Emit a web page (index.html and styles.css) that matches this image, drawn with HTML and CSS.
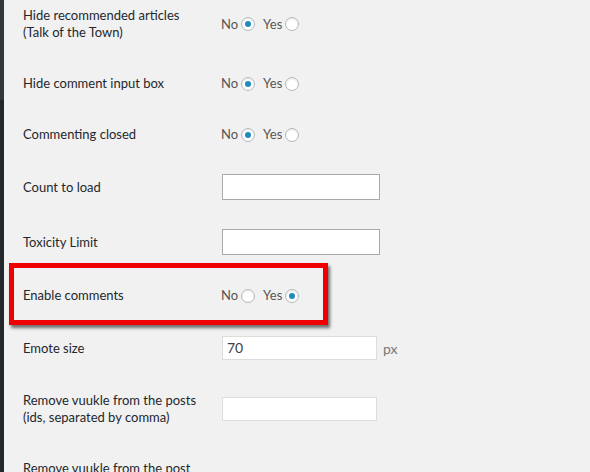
FILE: index.html
```html
<!DOCTYPE html>
<html>
<head>
<meta charset="utf-8">
<link rel="stylesheet" href="styles.css">
</head>
<body>
<div class="page">
  <div class="sidebar"></div>
  <main class="main">
    <div class="rows">
      <div class="row">
        <div class="label">Hide recommended articles<br>(Talk of the Town)</div>
        <div class="control">
          <span class="opt">No</span><span class="radio checked"></span>
          <span class="opt yes">Yes</span><span class="radio"></span>
        </div>
      </div>
      <div class="row">
        <div class="label">Hide comment input box</div>
        <div class="control">
          <span class="opt">No</span><span class="radio checked"></span>
          <span class="opt yes">Yes</span><span class="radio"></span>
        </div>
      </div>
      <div class="row">
        <div class="label">Commenting closed</div>
        <div class="control">
          <span class="opt">No</span><span class="radio checked"></span>
          <span class="opt yes">Yes</span><span class="radio"></span>
        </div>
      </div>
      <div class="row">
        <div class="label">Count to load</div>
        <div class="control"><span class="input dark"></span></div>
      </div>
      <div class="row">
        <div class="label">Toxicity Limit</div>
        <div class="control"><span class="input dark"></span></div>
      </div>
      <div class="row">
        <div class="label">Enable comments</div>
        <div class="control">
          <span class="opt">No</span><span class="radio"></span>
          <span class="opt yes">Yes</span><span class="radio checked"></span>
        </div>
      </div>
      <div class="row">
        <div class="label">Emote size</div>
        <div class="control"><span class="input light">70</span><span class="unit">px</span></div>
      </div>
      <div class="row">
        <div class="label">Remove vuukle from the posts<br>(ids, separated by comma)</div>
        <div class="control"><span class="input light"></span></div>
      </div>
      <div class="row">
        <div class="label">Remove vuukle from the post<br>types (separated by<br>comma)</div>
        <div class="control"><span class="input light"></span></div>
      </div>
    </div>
    <div class="highlight"></div>
  </main>
</div>
</body>
</html>
```
FILE: styles.css
```css
html, body {
  margin: 0;
  padding: 0;
  background: #f1f1f1;
  overflow: hidden;
}
.page {
  display: flex;
  min-height: 100vh;
  font-family: Lato, "Liberation Sans", sans-serif;
}
.sidebar {
  width: 4px;
  flex: none;
  background: linear-gradient(to bottom, #32373c 0, #32373c 100px, #23282d 100px);
}
.main {
  position: relative;
  flex: 1;
  padding-left: 19px;
}
.rows {
  margin-top: -10px;
}
.row {
  display: flex;
  align-items: center;
  padding: 17px 0;
}
.label {
  width: 198px;
  flex: none;
  font-size: 13px;
  line-height: 17px;
  color: #23282d;
}
.control {
  display: flex;
  align-items: center;
  min-height: 17px;
  font-size: 13px;
  color: #555;
}
.opt {
  line-height: 17px;
}
.opt.yes {
  margin-left: 8px;
}
.radio {
  width: 12px;
  height: 12px;
  margin-left: 3px;
  border: 1px solid #b4b9be;
  border-radius: 50%;
  background: #fff;
  box-shadow: inset 0 1px 2px rgba(0,0,0,0.1);
  display: flex;
  align-items: center;
  justify-content: center;
}
.radio.checked::after {
  content: "";
  width: 6px;
  height: 6px;
  border-radius: 50%;
  background: #1e8cbe;
}
.input {
  box-sizing: border-box;
  display: block;
  margin-left: 1px;
  background: #fff;
  font-size: 14px;
  color: #3c4146;
  padding: 0 4px;
}
.input.dark {
  width: 158px;
  height: 26px;
  margin-top: -3px;
  margin-bottom: -2px;
  border: 1px solid #a9a9a9;
}
.input.light {
  width: 155px;
  height: 24px;
  line-height: 22px;
  margin-top: -2px;
  margin-bottom: -2px;
  border: 1px solid #dddddd;
}
.unit {
  margin-left: 6px;
  font-size: 14px;
  color: #777;
}
.highlight {
  position: absolute;
  left: 5px;
  top: 263px;
  width: 309px;
  height: 52px;
  border: 5px solid #ee0000;
  box-shadow: 2px 3px 3px rgba(0,0,0,0.55);
}
```
